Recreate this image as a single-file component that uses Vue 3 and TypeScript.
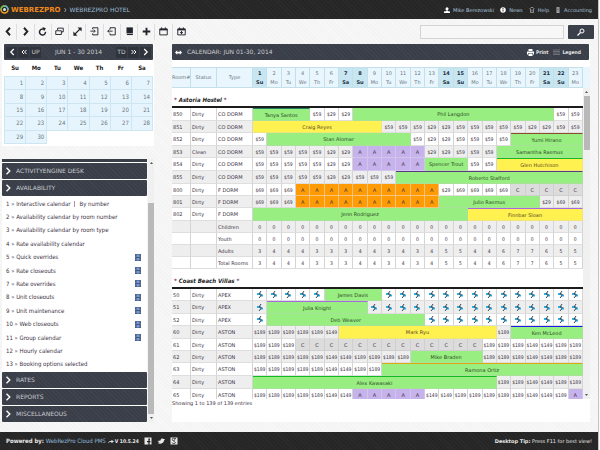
<script setup lang="ts">
import { ref } from 'vue'

interface Cell {
  text: string
  span: number
  kind: string
  stripe?: string
}
interface Row {
  room: string
  status: string
  type: string
  cells: Cell[]
  tall: boolean
}
interface Group {
  name: string
  rows: Row[]
}

const weekdays = ['Su', 'Mo', 'Tu', 'We', 'Th', 'Fr', 'Sa']
const weeks = [0, 1, 2, 3, 4].map((w) =>
  [1, 2, 3, 4, 5, 6, 7].map((d) => w * 7 + d).map((n) => (n <= 30 ? n : 0)),
)
const days = Array.from({ length: 23 }, (_, i) => ({
  n: i + 1,
  name: weekdays[i % 7],
  weekend: i % 7 === 0 || i % 7 === 6,
}))

const kinds: Record<string, string> = { A: 'away', O: 'orange', C: 'closed', Z: 'bolt' }

/* A row is a list of tokens: "$59*3" repeats a cell, "g:Name:4:stripe" is a booking bar. */
function parse(spec: string): Cell[] {
  return spec.split('|').flatMap((token) => {
    if (/^[gy]:/.test(token)) {
      const [tone, text, span, stripe] = token.split(':')
      return [{ text, span: Number(span), kind: tone === 'g' ? 'green' : 'yellow', stripe }]
    }
    const [value, times] = token.split('*')
    return Array.from({ length: Number(times ?? 1) }, () => ({
      text: value === 'O' ? 'A' : value,
      span: 1,
      kind: kinds[value] ?? 'plain',
    }))
  })
}
function row(room: string, status: string, type: string, spec: string): Row {
  const cells = parse(spec)
  return { room, status, type, cells, tall: cells.some((c) => c.stripe) }
}

const counts = '3|4*3|3*3|4*2|3|4|3|4|5*2|4*2|6|7*2|6|5*2'
const groups: Group[] = [
  {
    name: 'Astoria Hostel',
    rows: [
      row('850', 'Dirty', 'CO DORM', 'g:Tanya Santos:4:teal|$59|$29*2|g:Phil Langdon:14|$59*2'),
      row('851', 'Dirty', 'CO DORM', 'y:Craig Reyes:9|$59*3|$29*2|$59*5|$29*2|$59*2'),
      row('852', 'Dirty', 'CO DORM', '$59|g:Stan Alomar:10|$59|$29*2|$59*4|g:Yumi Hirano:5:brown'),
      row('853', 'Clean', 'CO DORM', '$59*5|$29*2|A*5|$29*2|$59*3|g:Samantha Rasmus:6'),
      row('854', 'Dirty', 'CO DORM', '$59*5|$29*2|A*5|g:Spencer Trout:3|$59*2|y:Glen Hutchison:6:lime'),
      row('855', 'Dirty', 'CO DORM', '$59*5|$29*2|$59*3|g:Roberto Stafford:13:plum'),
      row('800', 'Dirty', 'F DORM', '$69*3|O*10|$29|$69*4|C*5'),
      row('801', 'Dirty', 'F DORM', '$69*3|O*10|g:Julio Rasmus:7|$29|$69*2'),
      row('802', 'Dirty', 'F DORM', 'g:Jenn Rodriguez:15|y:Finnbar Sloan:8:violet'),
      row('', '', 'Children', '0*23'),
      row('', '', 'Youth', '0*23'),
      row('', '', 'Adults', counts),
      row('', '', 'Total Rooms', counts),
    ],
  },
  {
    name: 'Coast Beach Villas',
    rows: [
      row('50', 'Dirty', 'APEX', 'Z*5|g:James Davis:4|Z*14'),
      row('51', 'Dirty', 'APEX', 'Z|g:Julia Knight:7:violet|Z*15'),
      row('52', 'Dirty', 'APEX', 'Z|g:Deb Weaver:11|Z*11'),
      row('60', 'Dirty', 'ASTON', '$189*5|$149|y:Mark Ryu:11|$189|g:Ken McLeod:5:blue'),
      row('61', 'Dirty', 'ASTON', '$189*3|C*13|$189*3|$149*2|$189*2'),
      row('62', 'Dirty', 'ASTON', '$189*5|$149*2|$189*4|g:Mike Braden:5|$189*3|$149*2|$189*2'),
      row('63', 'Dirty', 'ASTON', '$189*5|$149*2|$189*2|g:Ramona Ortiz:14:gold'),
      row('64', 'Dirty', 'ASTON', 'g:Alex Kawasaki:17:lime|$189*2|$149*2|$189*2'),
      row('65', 'Dirty', 'ASTON', '$189*5|$149*2|A*5|$149*2|$189*5|$149*2|$189|A'),
    ],
  },
]

const items = [
  'Interactive calendar',
  'Availability calendar by room number',
  'Availability calendar by room type',
  'Rate availability calendar',
  'Quick overrides',
  'Rate closeouts',
  'Rate overrides',
  'Unit closeouts',
  'Unit maintenance',
  'Web closeouts',
  'Group calendar',
  'Hourly calendar',
  'Booking options selected',
].map((label, i) => ({ n: i + 1, label, film: i >= 4 && i <= 10 }))

const tools = ['Back', 'Forward', 'Reload', 'Windows', 'Full screen', 'Check in', 'Check out', 'Ledger', 'Add', 'Calendar', 'Today']
const query = ref('')
</script>

<template>
  <div class="page">
    <header class="top">
      <svg class="logo" viewBox="0 0 18 18" aria-hidden="true">
        <circle cx="9" cy="9" r="7" fill="none" stroke="#f5a020" stroke-width="3" />
        <path d="M2 9a7 7 0 0 1 7-7" fill="none" stroke="#6cc04a" stroke-width="3" />
        <path d="M9 2a7 7 0 0 1 7 7" fill="none" stroke="#4db8e8" stroke-width="3" />
        <circle cx="9" cy="9" r="3" fill="#cfeaf8" />
      </svg>
      <strong class="brand">WEBREZPRO</strong>
      <svg class="crumb" viewBox="0 0 6 10" aria-hidden="true"><path d="M1 1l3 4-3 4" fill="none" stroke="#999" stroke-width="2" /></svg>
      <span class="hotel">WEBREZPRO HOTEL</span>
      <nav class="links">
        <a href="#user">
          <svg viewBox="0 0 12 12"><circle cx="6" cy="3.5" r="3" fill="#fff" /><path d="M5 5h2v3l5 1v3H0V9l5-1z" fill="#fff" /></svg>
          Mike Berezowski
        </a>
        <a href="#news">
          <svg viewBox="0 0 12 12"><circle cx="6" cy="6" r="5.5" fill="#fff" /><path d="M6 2v2M6 5v4" stroke="#333" stroke-width="2" /></svg>
          News
        </a>
        <a href="#help">
          <svg viewBox="0 0 12 12"><path d="M1 4l3-3h4l3 3M3 4v7h6V4M6 5v4" fill="none" stroke="#aaa" stroke-width="1.5" /></svg>
          Help
        </a>
        <a href="#accounting">
          <svg viewBox="0 0 12 12"><path d="M3 0h6v12H3z" fill="#aaa" /><path d="M4 2h4M4 5h4M4 8h4" stroke="#444" /></svg>
          Accounting
        </a>
      </nav>
    </header>

    <div class="toolbar">
      <div class="tools">
        <button v-for="(t, i) in tools" :key="t" type="button" :aria-label="t">
          <svg viewBox="0 0 24 24" fill="none" stroke="#22252b" stroke-width="3">
            <path v-if="i === 0" d="M16 2L7 12l9 10" stroke-width="5" />
            <path v-else-if="i === 1" d="M8 2l9 10-9 10" stroke-width="5" />
            <template v-else-if="i === 2"><path d="M15 6a8 8 0 1 0 5 7" stroke-width="4" /><path d="M12 0l9 3-5 8z" fill="#22252b" stroke="none" /></template>
            <path v-else-if="i === 3" d="M7 8V3h15v10h-5M2 10h15v10H2z" stroke-width="2.5" />
            <template v-else-if="i === 4"><path d="M4 20L20 4" /><path d="M12 1h11v11zM1 12v11h11z" fill="#22252b" stroke="none" /></template>
            <path v-else-if="i === 5" d="M7 6V2h14v19H7v-4M1 11h12M10 7l4 4-4 4" stroke-width="2.5" />
            <path v-else-if="i === 6" d="M8 7V2h14v19H8v-4M15 11H2M6 7l-4 4 4 4" stroke-width="2.5" />
            <template v-else-if="i === 7"><path d="M4 1h17v16H4z" fill="#22252b" stroke="none" /><path d="M5 20h16" stroke-width="3" /></template>
            <path v-else-if="i === 8" d="M12 2v20M2 12h20" stroke-width="5" />
            <template v-else>
              <path d="M2 5h20v16H2zM7 1v4M17 1v4" stroke-width="2.5" /><path d="M2 5h20v4H2z" fill="#22252b" stroke="none" />
              <path v-if="i === 10" d="M12 10v9M8 15h8" stroke-width="2.5" />
            </template>
          </svg>
        </button>
      </div>
      <form class="search" @submit.prevent>
        <input v-model="query" type="search" aria-label="Search" />
        <button type="submit" aria-label="Search">
          <svg viewBox="0 0 16 16"><circle cx="10" cy="6" r="4" fill="none" stroke="#fff" stroke-width="2" /><path d="M7 9l-6 6" stroke="#fff" stroke-width="2.5" /></svg>
        </button>
      </form>
    </div>

    <div class="body">
      <aside class="side">
        <section class="month">
          <div class="bar month-bar">
            <button type="button" aria-label="Previous month"><svg viewBox="0 0 10 12"><path d="M8 1L3 6l5 5" /></svg></button>
            <button type="button" aria-label="Back a year"><svg viewBox="0 0 12 12"><path d="M6 2L2 6l4 4M11 2L7 6l4 4" /></svg></button>
            <button type="button" class="word">UP</button>
            <span class="month-name">JUN 1 - 30 2014</span>
            <button type="button" class="word">TD</button>
            <button type="button" aria-label="Ahead a year"><svg viewBox="0 0 12 12"><path d="M1 2l4 4-4 4M6 2l4 4-4 4" /></svg></button>
            <button type="button" aria-label="Next month"><svg viewBox="0 0 10 12"><path d="M2 1l5 5-5 5" /></svg></button>
          </div>
          <table class="days">
            <thead>
              <tr><th v-for="d in weekdays" :key="d" scope="col">{{ d }}</th></tr>
            </thead>
            <tbody>
              <tr v-for="(w, i) in weeks" :key="i">
                <td v-for="(n, j) in w" :key="j" :class="{ day: n }">{{ n || '' }}</td>
              </tr>
            </tbody>
          </table>
        </section>

        <nav class="menu">
          <div class="sections">
            <div class="sliver"></div>
            <button type="button" class="bar fold"><svg viewBox="0 0 10 12"><path d="M2 1l5 5-5 5" /></svg>ACTIVITYENGINE DESK</button>
            <button type="button" class="bar fold"><svg viewBox="0 0 10 12"><path d="M2 1l5 5-5 5" /></svg>AVAILABILITY</button>
            <ul>
              <li v-for="it in items" :key="it.n">
                <a href="#item">{{ it.n }} » {{ it.label }}</a>
                <template v-if="it.n === 1"><i class="pipe"></i><a href="#number">By number</a></template>
                <svg v-if="it.film" class="film" viewBox="0 0 12 14"><path d="M0 0h12v14H0z" fill="#4a5670" /><path d="M3 1h6v5H3zM3 8h6v5H3z" fill="#6f9be8" /><path d="M1.5 1v12M10.5 1v12" stroke="#a4aec2" stroke-dasharray="1.5 1.5" /></svg>
              </li>
            </ul>
            <button type="button" class="bar fold"><svg viewBox="0 0 10 12"><path d="M2 1l5 5-5 5" /></svg>RATES</button>
            <button type="button" class="bar fold"><svg viewBox="0 0 10 12"><path d="M2 1l5 5-5 5" /></svg>REPORTS</button>
            <button type="button" class="bar fold"><svg viewBox="0 0 10 12"><path d="M2 1l5 5-5 5" /></svg>MISCELLANEOUS</button>
          </div>
          <div class="track side-track">
            <svg viewBox="0 0 6 4"><path d="M3 0l3 4H0z" /></svg>
            <div class="thumb"></div>
            <svg viewBox="0 0 6 4"><path d="M0 0h6L3 4z" /></svg>
          </div>
        </nav>
      </aside>

      <main class="card">
        <div class="bar title">
          <svg class="arrows" viewBox="0 0 16 10"><path d="M0 5l5-5v3h6V0l5 5-5 5V7H5v3z" /></svg>
          <h1>CALENDAR: JUN 01-30, 2014</h1>
          <button type="button">
            <svg viewBox="0 0 14 14"><path d="M3 0h8v4H3zM0 5h14v6h-2V8H2v3H0zM3 9h8v5H3z" /></svg>Print
          </button>
          <button type="button">
            <svg viewBox="0 0 14 14"><path d="M0 2h14M0 5h14M0 8h14M0 11h14" /></svg>Legend
          </button>
        </div>
        <div class="head">
          <table class="grid">
            <colgroup><col class="c-room" /><col class="c-status" /><col class="c-type" /><col v-for="d in days" :key="d.n" /></colgroup>
            <thead>
              <tr>
                <th scope="col">Room#</th>
                <th scope="col">Status</th>
                <th scope="col">Type</th>
                <th v-for="d in days" :key="d.n" scope="col" :class="{ weekend: d.weekend }">{{ d.n }}<br />{{ d.name }}</th>
              </tr>
            </thead>
          </table>
        </div>
        <div class="scroller">
          <table class="grid">
            <colgroup><col class="c-room" /><col class="c-status" /><col class="c-type" /><col v-for="d in days" :key="d.n" /></colgroup>
            <tbody v-for="g in groups" :key="g.name">
              <tr class="group"><th colspan="26" scope="rowgroup"><b>*</b> {{ g.name }} <b>*</b></th></tr>
              <tr v-for="(r, i) in g.rows" :key="i" :class="{ odd: i % 2 === 1, tall: r.tall }">
                <td class="left">{{ r.room }}</td>
                <td class="left">{{ r.status }}</td>
                <td class="left">{{ r.type }}</td>
                <td v-for="(c, j) in r.cells" :key="j" :colspan="c.span" :class="[c.kind, c.stripe]">
                  <svg v-if="c.kind === 'bolt'" viewBox="0 0 12 14"><path d="M0 6h6M6 9h6" fill="none" stroke="#27b2ea" stroke-width="4" /><path d="M8 0L4 6h4v3l-4 5" fill="none" stroke="#3c4652" stroke-width="2" /></svg>
                  <template v-else>{{ c.text }}</template>
                </td>
              </tr>
            </tbody>
          </table>
          <div class="track">
            <svg viewBox="0 0 6 4"><path d="M3 0l3 4H0z" /></svg>
            <div class="thumb"></div>
            <svg viewBox="0 0 6 4"><path d="M0 0h6L3 4z" /></svg>
          </div>
        </div>
        <p class="showing">Showing 1 to 139 of 139 entries</p>
      </main>
    </div>

    <footer class="foot">
      <span class="powered"><strong>Powered by:</strong> <a href="#pms">WebRezPro Cloud PMS</a></span>
      <svg class="fwd" viewBox="0 0 14 10"><path d="M0 9c1-4 4-5 8-5V1l6 4-6 4V6C4 6 2 7 0 9z" fill="#ddd" /></svg>
      <strong class="version">V 10.5.24</strong>
      <a class="social" href="#facebook" aria-label="Facebook"><svg viewBox="0 0 16 16"><path d="M1 1h14v14H1z" fill="#e8e8e8" /><path d="M12 4h-2v12M6 9h7" fill="none" stroke="#222" stroke-width="2.5" /></svg></a>
      <a class="social" href="#twitter" aria-label="Twitter"><svg viewBox="0 0 16 16"><path d="M1 8l6-1c0-5 5-5 6-3l3 0-2 3c0 6-8 8-13 5l4-1z" fill="#e8e8e8" /></svg></a>
      <a class="social" href="#google" aria-label="Google"><svg viewBox="0 0 16 16"><path d="M1 1h14v14H1z" fill="#e8e8e8" /><circle cx="7" cy="5" r="2.5" fill="none" stroke="#222" stroke-width="1.5" /><path d="M9 3h3M7 8l4 3c0 3-7 3-7 0" fill="none" stroke="#222" stroke-width="1.5" /></svg></a>
      <span class="tip"><strong>Desktop Tip:</strong> Press F11 for best view!</span>
    </footer>
  </div>
</template>

<style>
body {
  margin: 0;
  background: #fafafa;
}
</style>

<style scoped>
.page {
  min-height: 100vh;
  box-sizing: border-box;
  margin-right: 1px;
  border-right: 1px solid #c4c4c4;
  display: flex;
  flex-direction: column;
  background: repeating-linear-gradient(45deg, #f8f8f8 0 1px, #f4f4f4 1px 3px);
  font-family: 'DejaVu Sans', sans-serif;
  font-size: 5px;
  line-height: 8px;
  color: #3c3244;
}
svg {
  display: block;
  flex: none;
}
button {
  font: inherit;
  color: inherit;
  background: none;
  border: 0;
  padding: 0;
  margin: 0;
}
a {
  color: inherit;
  text-decoration: none;
}
.top,
.foot {
  display: flex;
  align-items: center;
  background: repeating-linear-gradient(45deg, #2b2b2b 0 1px, #262626 1px 3px);
}
.top {
  height: 19px;
  color: #a9c3dc;
}
.logo {
  width: 9px;
  height: 9px;
}
.brand {
  margin-left: 2px;
  font-size: 7px;
  color: #f08a1c;
}
.crumb {
  width: 3px;
  height: 6px;
  margin: 0 3px;
}
.hotel {
  font-size: 6px;
  color: #9dbcd6;
}
.links {
  margin-left: auto;
  padding-right: 6px;
  display: flex;
  gap: 6px;
}
.links a {
  display: flex;
  align-items: center;
  gap: 3px;
}
.links svg {
  width: 6px;
  height: 6px;
}
.toolbar {
  height: 25px;
  display: flex;
  align-items: center;
  justify-content: space-between;
}
.tools {
  width: 190px;
  display: grid;
  grid-template-columns: repeat(11, 1fr);
}
.tools button {
  height: 16px;
  display: grid;
  place-items: center;
  border-right: 1px solid #dedede;
}
.tools button:last-child {
  border-right: 0;
}
.tools svg {
  width: 9px;
  height: 9px;
}
.search {
  width: 174px;
  display: flex;
  gap: 4px;
  margin-right: 4px;
}
.search input {
  flex: 1;
  min-width: 0;
  height: 14px;
  box-sizing: border-box;
  border: 1px solid #d4d4d4;
  background: #f7f7f7;
  font: inherit;
  padding: 0 3px;
}
.search button {
  width: 26px;
  height: 14px;
  display: grid;
  place-items: center;
  border-radius: 1px;
  background: #3a3f49;
}
.search button svg {
  width: 8px;
  height: 8px;
}
.bar {
  height: 16px;
  display: flex;
  align-items: center;
  border-radius: 1px;
  background: repeating-linear-gradient(45deg, #3f444e 0 1px, #3a3e48 1px 3px);
  color: #c9ccd1;
  font-size: 6px;
}
.bar path {
  fill: none;
  stroke: #fff;
  stroke-width: 2;
}
.body {
  flex: 1;
  display: flex;
  padding: 0 8px 10px 2px;
}
.side {
  width: 152px;
  flex: none;
  margin-right: 18px;
  display: flex;
  flex-direction: column;
}
.month {
  padding: 0 1px 2px 2px;
  background: #fff;
}
.month-bar {
  gap: 1px;
  padding: 0 2px;
}
.month-bar button {
  height: 11px;
  width: 11px;
  display: grid;
  place-items: center;
  border-radius: 1px;
  background: #2f333b;
}
.month-bar svg {
  width: 6px;
  height: 8px;
}
.month-name {
  flex: 1;
  text-align: center;
}
.days {
  width: 100%;
  height: 84px;
  table-layout: fixed;
  border-collapse: collapse;
  font-size: 6px;
}
.days th {
  height: 16px;
  padding: 0;
  font-family: 'DejaVu Sans Condensed', 'DejaVu Sans', sans-serif;
  color: #222;
}
.days td {
  padding: 0 2px 0 0;
  text-align: right;
  font-family: 'DejaVu Sans Condensed', 'DejaVu Sans', sans-serif;
  color: #6a7680;
}
.days .day {
  background: #e6f5fd;
  border: 1px solid #cde6f2;
}
.menu {
  flex: 1;
  display: flex;
  gap: 1px;
  margin-top: 13px;
}
.sections {
  flex: 1;
  display: flex;
  flex-direction: column;
  gap: 1px;
  background: #fff;
}
.sliver {
  height: 3px;
  background: #3a3e48;
}
.fold {
  flex: none;
  gap: 4px;
  padding: 0 3px;
  text-align: left;
}
.fold svg {
  width: 7px;
  height: 8px;
}
.menu ul {
  flex: 1;
  margin: 0;
  padding: 0 6px 0 4px;
  list-style: none;
  display: grid;
  grid-auto-rows: 1fr;
  font-family: 'DejaVu Sans Condensed', 'DejaVu Sans', sans-serif;
  font-size: 6px;
}
.menu li {
  display: flex;
  align-items: center;
}
.pipe {
  width: 1px;
  height: 6px;
  margin: 0 4px;
  background: #c088a8;
}
.film {
  width: 6px;
  height: 7px;
  margin-left: auto;
}
.track {
  width: 7px;
  flex: none;
  display: flex;
  flex-direction: column;
  align-items: center;
  justify-content: space-between;
  background: #f0f0f0;
}
.track svg {
  width: 3px;
  height: 2px;
  padding: 3px 0;
}
.track path {
  fill: #555;
}
.thumb {
  width: 6px;
  height: 54px;
  margin-bottom: auto;
  background: #b9b9b9;
}
.side-track {
  width: 6px;
}
.side-track .thumb {
  height: auto;
  flex: 1;
  margin: 36px 0 0;
}
.card {
  flex: 1;
  min-width: 0;
  background: #fff;
}
.title {
  padding: 0 8px 0 3px;
  gap: 5px;
  margin-right: 1px;
}
.title h1 {
  flex: 1;
  margin: 0;
  font: inherit;
}
.title button {
  display: flex;
  align-items: center;
  gap: 2px;
  font-family: 'DejaVu Sans Condensed', 'DejaVu Sans', sans-serif;
  font-size: 5px;
  font-weight: bold;
  color: #e4e4e4;
}
.title button svg {
  width: 7px;
  height: 7px;
}
.title button:nth-of-type(1) path,
.title .arrows path {
  fill: #fff;
  stroke: none;
}
.title button:nth-of-type(2) path {
  stroke: #a0a0a0;
  stroke-width: 1;
}
.arrows {
  width: 7px;
  height: 5px;
}
.head {
  margin-top: 7px;
  padding-right: 7px;
  background: #e9f6fe;
}
.grid {
  width: 100%;
  table-layout: fixed;
  border-collapse: separate;
  border-spacing: 0;
}
.c-room {
  width: 19px;
}
.c-status {
  width: 26px;
}
.c-type {
  width: 36px;
}
.head th {
  height: 21px;
  box-sizing: border-box;
  padding: 0;
  border: 1px solid #c3dfea;
  border-left: 0;
  font-weight: normal;
  line-height: 9px;
  white-space: nowrap;
  color: #6a7680;
}
.head .weekend {
  font-weight: bold;
  color: #1b2b38;
  background: #c8e5f2;
}
.scroller {
  height: 311px;
  display: flex;
  align-items: flex-start;
  overflow: hidden;
}
.scroller .grid {
  flex: 1;
}
.scroller .track {
  align-self: stretch;
}
.group th {
  height: 20px;
  box-sizing: border-box;
  padding: 6px 0 0 2px;
  text-align: left;
  font-family: 'DejaVu Sans Condensed', 'DejaVu Sans', sans-serif;
  font-size: 6px;
  font-style: italic;
  color: #222;
  border-bottom: 2px solid #1c1c1c;
}
.group b {
  color: #7a3f6c;
}
.scroller td {
  height: 12px;
  box-sizing: border-box;
  padding: 0;
  text-align: center;
  line-height: 8px;
  white-space: nowrap;
  border-right: 1px solid #d4d4d4;
  border-bottom: 1px solid #dedede;
}
.scroller .tall td {
  height: 13px;
}
.scroller .plain {
  font-family: 'DejaVu Sans Condensed', 'DejaVu Sans', sans-serif;
}
.odd td {
  background: #eeeeee;
}
.scroller .left {
  text-align: left;
  padding-left: 1px;
}
.scroller .green,
.scroller .yellow {
  background: #98ee80;
  border-color: #a8e298;
  color: #2e4a2a;
}
.scroller .yellow {
  background: #fff150;
  border-color: #f0e47c;
  color: #5a4a20;
}
.scroller .away {
  background: #c6b3ec;
  border-color: #d2c4ee;
}
.scroller .orange {
  background: #ff9c05;
  border-color: #f7c27a;
}
.scroller .closed {
  background: #dcdcdc;
  border-color: #cfcfcf;
}
.bolt svg {
  width: 6px;
  height: 7px;
  margin: 0 auto;
}
.scroller .teal {
  border-top: 1px solid #1f7f63;
}
.scroller .brown {
  border-top: 1px solid #8a4b2c;
}
.scroller .lime {
  border-top: 1px solid #10bc22;
}
.scroller .plum {
  border-top: 1px solid #5c3a80;
}
.scroller .violet {
  border-top: 1px solid #a868e0;
}
.scroller .blue {
  border-top: 1px solid #1a1af0;
}
.scroller .gold {
  border-top: 1px solid #dcaa10;
}
.showing {
  margin: 0;
}
.foot {
  height: 18px;
  padding: 0 6px;
  color: #e6e6e6;
}
.powered {
  font-family: 'DejaVu Sans Condensed', 'DejaVu Sans', sans-serif;
  font-size: 6px;
}
.version {
  font-family: 'DejaVu Sans Condensed', 'DejaVu Sans', sans-serif;
}
.foot span a {
  color: #8fb8dc;
}
.fwd {
  width: 6px;
  height: 5px;
  margin: 0 1px 0 2px;
}
.social {
  margin-left: 5px;
}
.social svg {
  width: 8px;
  height: 8px;
}
.tip {
  margin-left: auto;
}
</style>
